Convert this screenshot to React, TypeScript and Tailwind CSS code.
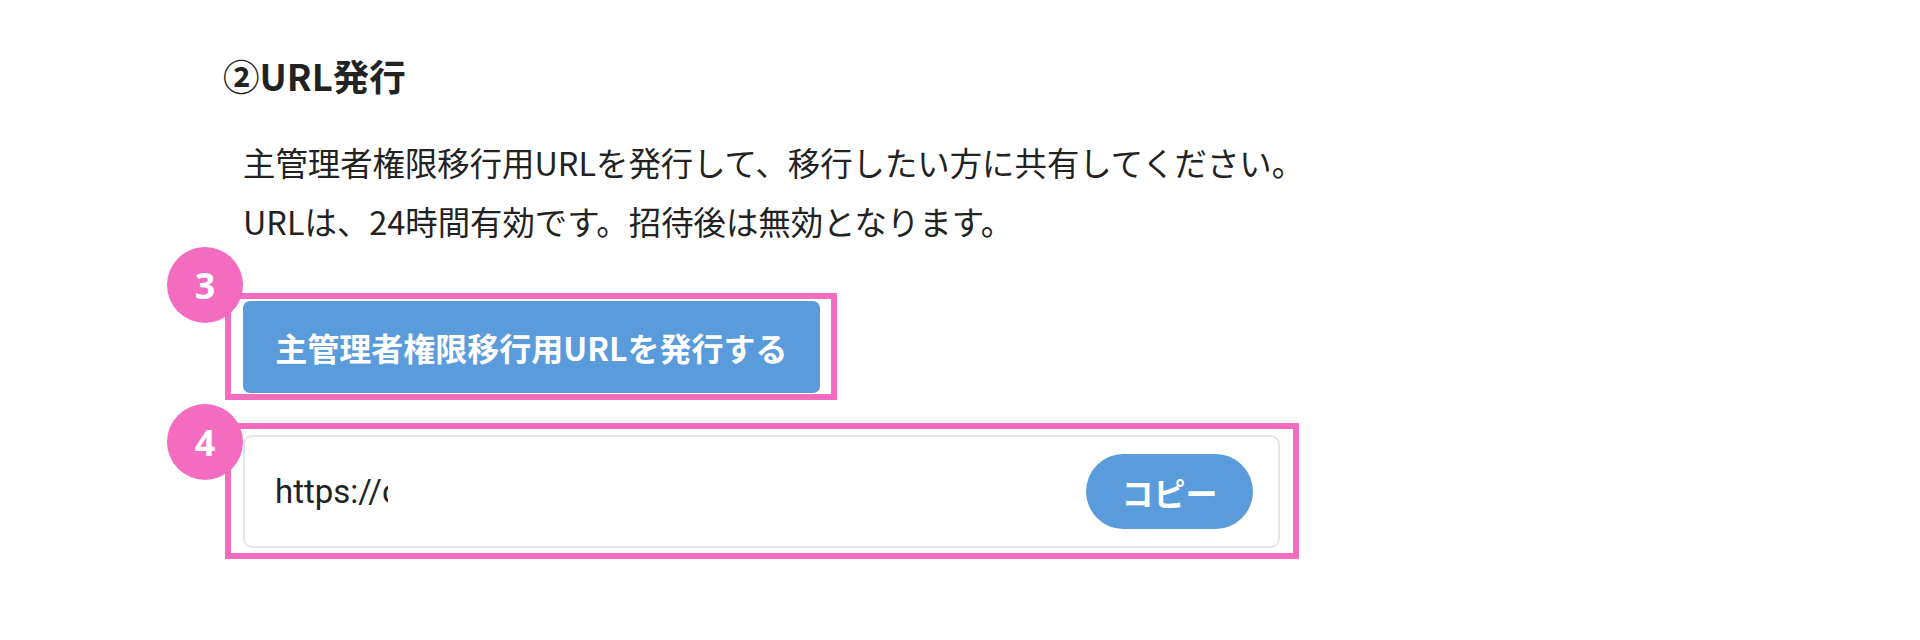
import React from "react";

const jp = { fontFamily: '"Noto Sans CJK JP", "Noto Sans", sans-serif' };

function Badge({ n, className }: { n: string; className: string }) {
  return (
    <div
      className={`absolute w-[76px] h-[76px] rounded-full bg-[#f36cc0] flex items-center justify-center text-white text-[36px] font-bold leading-none ${className}`}
      style={{ fontFamily: '"Open Sans", "Noto Sans", sans-serif' }}
    >
      <span className="mt-[2px]">{n}</span>
    </div>
  );
}

export default function App() {
  return (
    <div className="w-full h-[640px] bg-white text-[#222222]" style={jp}>
      <div className="pl-[223px] pt-[54px]">
        <h2 className="text-[36.5px] font-bold leading-[44px] text-[#222222]">②URL発行</h2>
        <div className="ml-[20px] mt-[34px] text-[32.4px] leading-[59px] text-[#222222]">
          <p>主管理者権限移行用URLを発行して、移行したい方に共有してください。</p>
          <p>URLは、24時間有効です。招待後は無効となります。</p>
        </div>

        <div className="relative ml-[2px] mt-[43px] w-[612px] h-[107px] border-[6px] border-[#f36cc0] pt-[2px] pl-[12px]">
          <Badge n="3" className="left-[-64px] top-[-52px]" />
          <button className="w-[577px] h-[92px] rounded-[7px] bg-[#5a9bdc] text-white text-[32px] font-bold flex items-center justify-center">
            主管理者権限移行用URLを発行する
          </button>
        </div>

        <div className="relative ml-[2px] mt-[23px] w-[1074px] h-[136px] border-[6px] border-[#f36cc0] pt-[6px] pl-[12px]">
          <Badge n="4" className="left-[-64px] top-[-25px]" />
          <div className="w-[1037px] h-[113px] rounded-[9px] border-2 border-[#e6e6e6] bg-white flex items-center justify-between pl-[30px] pr-[25px]">
            <div
              className="w-[113px] overflow-hidden whitespace-nowrap text-[33px] text-[#222222]"
              style={{ fontFamily: '"Roboto", "Liberation Sans", sans-serif' }}
            >
              https://c
            </div>
            <button className="w-[167px] h-[75px] rounded-full bg-[#5a9bdc] text-white text-[32px] font-bold flex items-center justify-center">
              コピー
            </button>
          </div>
        </div>
      </div>
    </div>
  );
}
